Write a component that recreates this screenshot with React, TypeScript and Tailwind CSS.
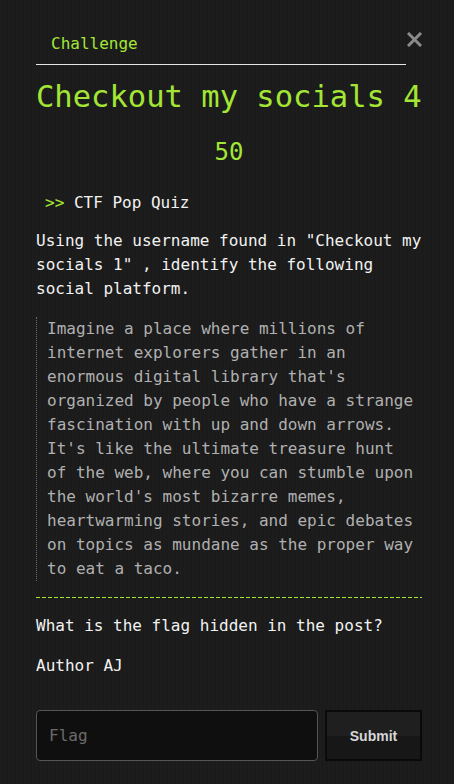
export default function App() {
  return (
    <div className="min-h-screen bg-[#1b1b1b] bg-[repeating-linear-gradient(90deg,rgba(255,255,255,0.012)_0px,rgba(255,255,255,0.012)_1px,transparent_1px,transparent_4px)] pl-[36px] pr-[32px] pt-[32px] pb-[22px] font-['DejaVu_Sans_Mono',monospace] text-[16px] leading-[24px]">
      {/* Tab header */}
      <div className="flex items-start">
        <div className="flex-1 border-b border-[#e5e5e5] pb-[8px] pl-[15px] text-[#a3e635]">
          Challenge
        </div>
        <button className="ml-[1px] -mt-[1px] flex h-[16px] w-[15px] items-center justify-center text-[#8a8a8a]">
          <svg width="15" height="15" viewBox="0 0 15 15" fill="none">
            <path d="M2 2L13 13M13 2L2 13" stroke="currentColor" strokeWidth="3" strokeLinecap="square" />
          </svg>
        </button>
      </div>

      <h1 className="mt-[14px] text-[30.5px] leading-[36px] text-[#a3e635]">
        Checkout my socials 4
      </h1>

      <p className="mt-[21px] text-center text-[24px] leading-[32px] text-[#a3e635]">50</p>

      <p className="mt-[23px] pl-[9px] text-[#f2f2f2]">
        <span className="text-[#a3e635]">&gt;&gt;</span> CTF Pop Quiz
      </p>

      <p className="mt-[14px] text-[#f2f2f2]">
        Using the username found in "Checkout my socials 1" , identify the following social platform.
      </p>

      <blockquote className="mt-[16px] border-l border-dotted border-[#6a6a6a] pl-[10px] text-[#b0b0b0]">
        Imagine a place where millions of internet explorers gather in an enormous digital library that's organized by people who have a strange fascination with up and down arrows. It's like the ultimate treasure hunt of the web, where you can stumble upon the world's most bizarre memes, heartwarming stories, and epic debates on topics as mundane as the proper way to eat a taco.
      </blockquote>

      <div className="mt-[16px] h-px bg-[repeating-linear-gradient(90deg,#a3e635_0px,#a3e635_4px,transparent_4px,transparent_6px)]" />

      <p className="mt-[16px] text-[#f2f2f2]">What is the flag hidden in the post?</p>

      <p className="mt-[16px] text-[#f2f2f2]">Author AJ</p>

      <div className="mt-[32px] flex gap-[7px]">
        <input
          placeholder="Flag"
          className="h-[51px] flex-1 rounded-[4px] border border-[#555] bg-[#0f0f0f] px-[12px] text-[#ddd] placeholder-[#6b6b6b] outline-none"
        />
        <button className="h-[51px] w-[97px] border-2 border-[#0a0a0a] bg-[linear-gradient(180deg,#1f1f1f_0%,#1f1f1f_50%,#171717_50%,#171717_100%)] font-['Liberation_Sans',Arial,sans-serif] text-[14px] font-bold text-[#d6d6d6]">
          Submit
        </button>
      </div>
    </div>
  );
}
